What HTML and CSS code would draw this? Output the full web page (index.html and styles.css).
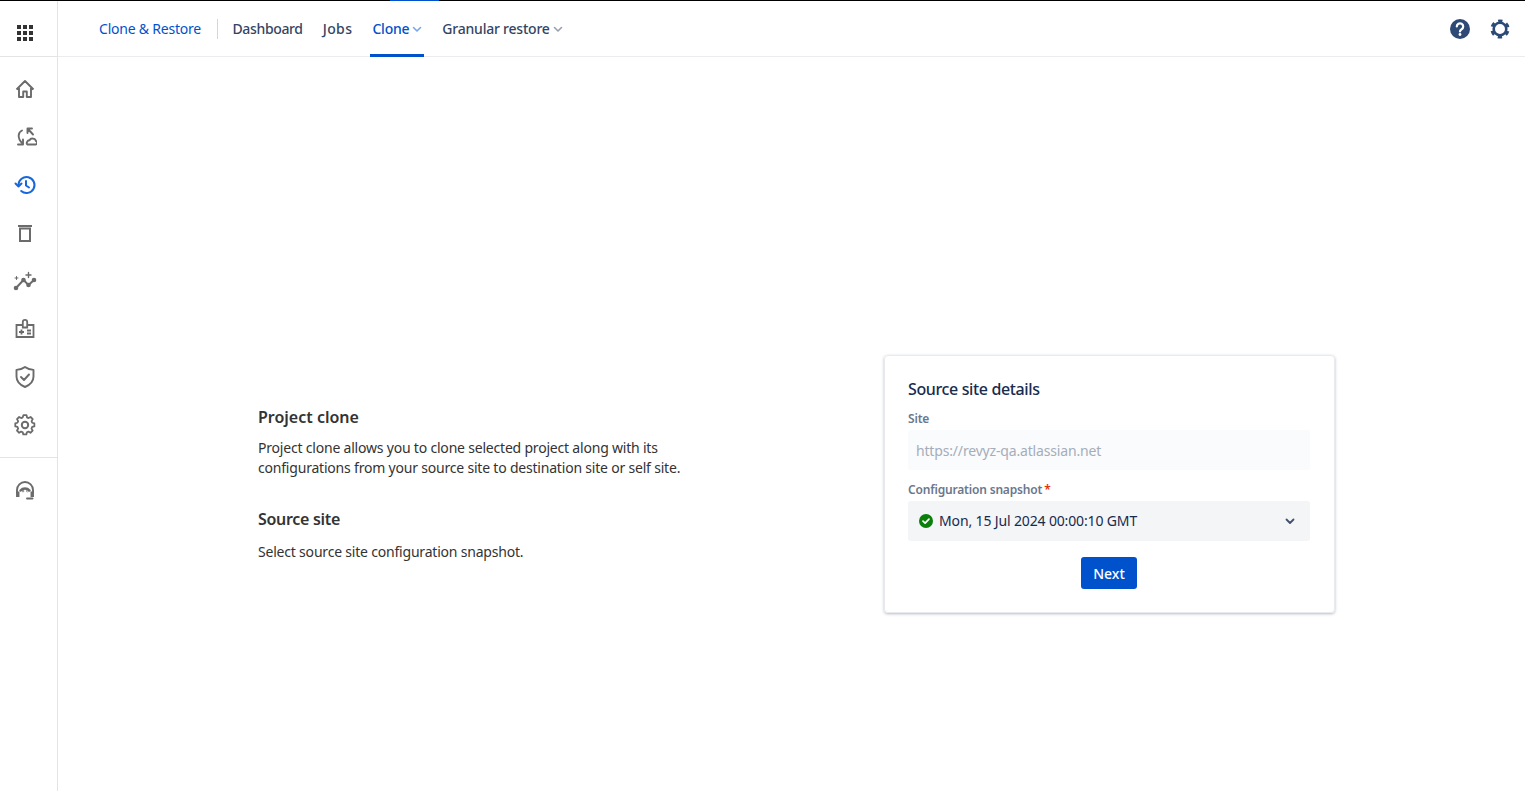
FILE: index.html
```html
<!DOCTYPE html>
<html lang="en">
<head>
<meta charset="utf-8">
<title>Project clone</title>
<link rel="stylesheet" href="styles.css">
</head>
<body>
<div class="loadbar"><span class="loadbar-active"></span></div>
<div class="app">
  <aside class="sidebar">
    <div class="side-top">
      <svg class="grid-icon" width="16" height="16" viewBox="0 0 16 16" fill="#333"><rect x="0" y="0" width="4" height="4"/><rect x="6" y="0" width="4" height="4"/><rect x="12" y="0" width="4" height="4"/><rect x="0" y="6" width="4" height="4"/><rect x="6" y="6" width="4" height="4"/><rect x="12" y="6" width="4" height="4"/><rect x="0" y="12" width="4" height="4"/><rect x="6" y="12" width="4" height="4"/><rect x="12" y="12" width="4" height="4"/></svg>
    </div>
    <nav class="side-list">
      <div class="side-item"><svg width="24" height="24" viewBox="0 0 24 24" fill="none" stroke="#6b6b6b" stroke-width="1.900" stroke-linejoin="round"><path d="M3.500 12.500 12 4l8.500 8.500M6 11v9h4.200v-5.500h3.600V20H18v-9"/></svg></div>
      <div class="side-item"><svg width="24" height="24" viewBox="0 0 24 24" fill="none" stroke="#6b6b6b" stroke-width="1.900" stroke-linecap="round" stroke-linejoin="round"><path d="M9 5.500C5.500 7 3.500 12.500 9.500 18.500"/><path d="M5 19.500H10V14.500"/><path d="M14.500 8V3.500H19M15 4l5 5.500"/><path d="M14.500 19.500h8c2 0 2.300-3 .3-3.500-.3-2.700-5-3.500-6.300-.7-1.800-.3-4 3.400-2 4.200z"/></svg></div>
      <div class="side-item"><svg width="24" height="24" viewBox="0 0 24 24" fill="none" stroke="#1868db" stroke-width="2" stroke-linecap="round" stroke-linejoin="round"><path d="M5.500 12a8 8 0 1 1 2.700 6"/><path d="M2.500 10.500 5.500 13.500 8.500 10.500"/><path d="M13 8v4.500l3 2"/></svg></div>
      <div class="side-item"><svg width="24" height="24" viewBox="0 0 24 24" fill="none" stroke="#6b6b6b" stroke-width="2"><path d="M5 5h14"/><path d="M7 7.500h10V20H7z"/></svg></div>
      <div class="side-item"><svg width="24" height="24" viewBox="0 0 24 24" fill="none" stroke="#6b6b6b" stroke-width="2" stroke-linecap="round" stroke-linejoin="round"><path d="M3 19 10.500 11l5 5 5.500-5"/><circle cx="3" cy="19" r="1.300" fill="#6b6b6b"/><circle cx="10.500" cy="11" r="1.300" fill="#6b6b6b"/><circle cx="15.500" cy="16" r="1.300" fill="#6b6b6b"/><circle cx="21" cy="11" r="1.300" fill="#6b6b6b"/><path stroke-width="1" d="M2 9h3M3.500 7.500v3"/><path stroke-width="1.400" d="M13 6h5M15.500 3.500v5"/></svg></div>
      <div class="side-item"><svg width="24" height="24" viewBox="0 0 24 24" fill="none" stroke="#6b6b6b" stroke-width="1.800"><path d="M9.500 8H3.500v12h17V8h-6"/><path d="M9.800 10.500V5a2.200 2.200 0 0 1 4.400 0v5.500z"/><path d="M6 15h5M8.500 12.500v5M14 13.500h4M14 16.500h4"/></svg></div>
      <div class="side-item"><svg width="24" height="24" viewBox="0 0 24 24" fill="none" stroke="#6b6b6b" stroke-width="1.900" stroke-linecap="round" stroke-linejoin="round"><path d="M12 2c2.500 2 5.500 2.700 8.500 2.900v6.600c0 4.800-3.400 8.400-8.500 10.500-5.100-2.100-8.500-5.700-8.500-10.500V4.900C6.500 4.700 9.500 4 12 2z"/><path d="m8 12 3 3 5-5.500"/></svg></div>
      <div class="side-item"><svg width="24" height="24" viewBox="0 0 24 24" fill="none" stroke="#6b6b6b" stroke-width="2" stroke-linejoin="round"><circle cx="12" cy="12" r="3.200"/><path d="M10.300 3h3.400l.5 2.500 1.700.8 2.300-1.200 2.400 2.400-1.300 2.200.7 1.800 2.400.7v3.400l-2.400.6-.8 1.800 1.300 2.200-2.400 2.400-2.200-1.300-1.800.8-.6 2.400h-3.400l-.6-2.400-1.800-.8-2.200 1.300-2.400-2.400 1.300-2.200-.8-1.800-2.400-.6v-3.400l2.400-.7.800-1.800-1.300-2.200 2.400-2.400 2.200 1.200 1.800-.8z" transform="translate(12 12) scale(.9) translate(-12 -14)"/></svg></div>
    </nav>
    <div class="side-bottom">
      <div class="side-item"><svg width="24" height="24" viewBox="0 0 24 24" fill="none" stroke="#6b6b6b" stroke-width="1.900" stroke-linecap="round"><path d="M4 14.500V12a8 8 0 0 1 16 0v2.500"/><path d="M4 14.500v3.500h1.500v-3.500zM18.500 14.500v3.500H20v-3.500z" fill="#6b6b6b"/><path d="M7.500 12.500a6 6 0 0 1 9 0" stroke-width="2.400"/><path d="M14 20.500h5.500"/><circle cx="10" cy="13" r=".3"/><circle cx="14.500" cy="13" r=".3"/></svg></div>
    </div>
  </aside>
  <div class="content">
    <header class="topbar">
      <a class="brand">Clone &amp; Restore</a>
      <span class="divider"></span>
      <a class="tab tab-dashboard">Dashboard</a>
      <a class="tab tab-jobs">Jobs</a>
      <a class="tab tab-active">Clone<svg class="caret" width="10" height="10" viewBox="0 0 10 10" fill="none" stroke="#7aa5e8" stroke-width="1.600" stroke-linecap="round" stroke-linejoin="round"><path d="M1.500 3.500 5 7l3.500-3.500"/></svg></a>
      <a class="tab">Granular restore<svg class="caret" width="10" height="10" viewBox="0 0 10 10" fill="none" stroke="#97a0af" stroke-width="1.600" stroke-linecap="round" stroke-linejoin="round"><path d="M1.500 3.500 5 7l3.500-3.500"/></svg></a>
      <div class="top-actions">
        <svg width="24" height="24" viewBox="0 0 24 24"><circle cx="12" cy="12" r="10" fill="#2c4a75"/><path d="M8.800 9.500a3.200 3.200 0 1 1 4.800 2.800c-1 .6-1.600 1-1.600 2.200" fill="none" stroke="#fff" stroke-width="2.200" stroke-linecap="round"/><circle cx="12" cy="17.500" r="1.400" fill="#fff"/></svg>
        <svg width="24" height="24" viewBox="0 0 24 24" fill="none" stroke="#2c4a75"><circle cx="12" cy="12" r="6.300" stroke-width="2.600"/><circle cx="12" cy="12" r="8.200" stroke-width="2.800" stroke-dasharray="4.300 4.290" stroke-dashoffset="-2.150"/></svg>
      </div>
    </header>
    <main class="main">
      <section class="intro">
        <h2 class="intro-title">Project clone</h2>
        <p class="intro-text">Project clone allows you to clone selected project along with its configurations from your source site to destination site or self site.</p>
        <h2 class="intro-title intro-title-second">Source site</h2>
        <p class="intro-text">Select source site configuration snapshot.</p>
      </section>
      <section class="card">
        <h3 class="card-title">Source site details</h3>
        <label class="field-label">Site</label>
        <div class="input input-disabled">https://revyz-qa.atlassian.net</div>
        <label class="field-label field-label-second">Configuration snapshot<span class="req">*</span></label>
        <div class="input select">
          <svg width="14" height="14" viewBox="0 0 14 14"><circle cx="7" cy="7" r="7" fill="#0a7f0a"/><path d="M4 7.200 6.100 9.200 10 5.200" fill="none" stroke="#fff" stroke-width="1.700" stroke-linecap="round" stroke-linejoin="round"/></svg>
          <span class="select-value">Mon, 15 Jul 2024 00:00:10 GMT</span>
          <svg class="select-caret" width="10" height="10" viewBox="0 0 10 10" fill="none" stroke="#42526e" stroke-width="1.800" stroke-linecap="round" stroke-linejoin="round"><path d="M1.500 3.500 5 7l3.500-3.500"/></svg>
        </div>
        <div class="actions"><button class="btn">Next</button></div>
      </section>
    </main>
  </div>
</div>
</body>
</html>
```
FILE: styles.css
```css
* { box-sizing: border-box; }
html, body { margin: 0; height: 100%; }
body { font-family: "Noto Sans", "Open Sans", sans-serif; color: #333; background: #fff; overflow: hidden; }
.loadbar { height: 1px; background: #000; position: relative; }
.loadbar-active { position: absolute; left: 390px; top: 0; width: 49px; height: 1px; background: #0052cc; }
.app { display: flex; height: 790px; }
.sidebar { width: 58px; flex: none; border-right: 1px solid #e4e4e4; display: flex; flex-direction: column; }
.side-top { height: 56px; border-bottom: 1px solid #e4e4e4; display: flex; align-items: center; justify-content: center; padding-right: 7px; padding-top: 8px; }
.grid-icon { display: block; }
.side-list { display: flex; flex-direction: column; padding: 8px 0 8px; border-bottom: 1px solid #e4e4e4; }
.side-item { height: 48px; display: flex; align-items: center; justify-content: center; padding-right: 8px; }
.side-bottom { padding-top: 8px; }
.content { flex: 1; min-width: 0; display: flex; flex-direction: column; }
.topbar { height: 56px; border-bottom: 1px solid #ebecf0; display: flex; align-items: center; padding-left: 41px; padding-right: 13px; font-size: 14px; letter-spacing: -.22px; }
.brand { color: #0052cc; margin-right: 16px; }
.divider { width: 1px; height: 20px; background: #d4d6da; margin-right: 12.5px; }
.tab { color: #344563; font-weight: 500; padding: 0 2px; margin-right: 16px; height: 55px; display: flex; align-items: center; position: relative; }
.tab-dashboard { letter-spacing: -.35px; }
.tab-jobs { letter-spacing: .4px; }
.tab-active { color: #0052cc; }
.tab-active::after { content: ""; position: absolute; left: 0; right: 0; bottom: -1px; height: 3px; background: #0052cc; }
.caret { margin-left: 3px; }
.top-actions { margin-left: auto; display: flex; gap: 16px; }
.main { flex: 1; display: flex; align-items: flex-start; padding: 298px 0 0 200px; }
.intro { width: 440px; margin-top: 52px; margin-right: 186px; font-size: 14px; line-height: 20px; letter-spacing: -.2px; }
.intro-title { font-size: 16px; font-weight: 600; line-height: 20px; margin: 0 0 11px; color: #333; letter-spacing: 0; }
.intro-title-second { margin-top: 31px; margin-bottom: 13px; letter-spacing: -.3px; }
.intro-text { margin: 0; }
.card { width: 451px; height: 258px; border: 1px solid #e8eaee; border-radius: 4px; box-shadow: 0 1px 3px rgba(9,30,66,.3); padding: 23px 24px 0 23px; }
.card-title { font-size: 16px; font-weight: 500; line-height: 20px; margin: 0 0 12px; color: #172b4d; letter-spacing: -.37px; }
.field-label { display: block; font-size: 12px; font-weight: 600; line-height: 16px; color: #6b778c; margin-bottom: 3px; letter-spacing: -.18px; }
.field-label-second { margin-top: 12px; margin-bottom: 3px; }
.req { color: #de350b; margin-left: 2px; }
.input { height: 40px; border-radius: 3px; display: flex; align-items: center; font-size: 14px; padding: 0 8px; letter-spacing: -.17px; }
.input-disabled { background: #fafbfc; color: #a5adba; }
.select { background: #f4f5f7; color: #172b4d; padding: 0 15px 0 11px; letter-spacing: -.14px; }
.select-value { margin-left: 6px; padding-bottom: 2px; }
.select-caret { margin-left: auto; }
.actions { display: flex; justify-content: center; margin-top: 16px; }
.btn { width: 56px; height: 32px; background: #0052cc; color: #fff; border: 0; border-radius: 3px; font: 500 14px "Noto Sans", sans-serif; padding: 0; }
```
